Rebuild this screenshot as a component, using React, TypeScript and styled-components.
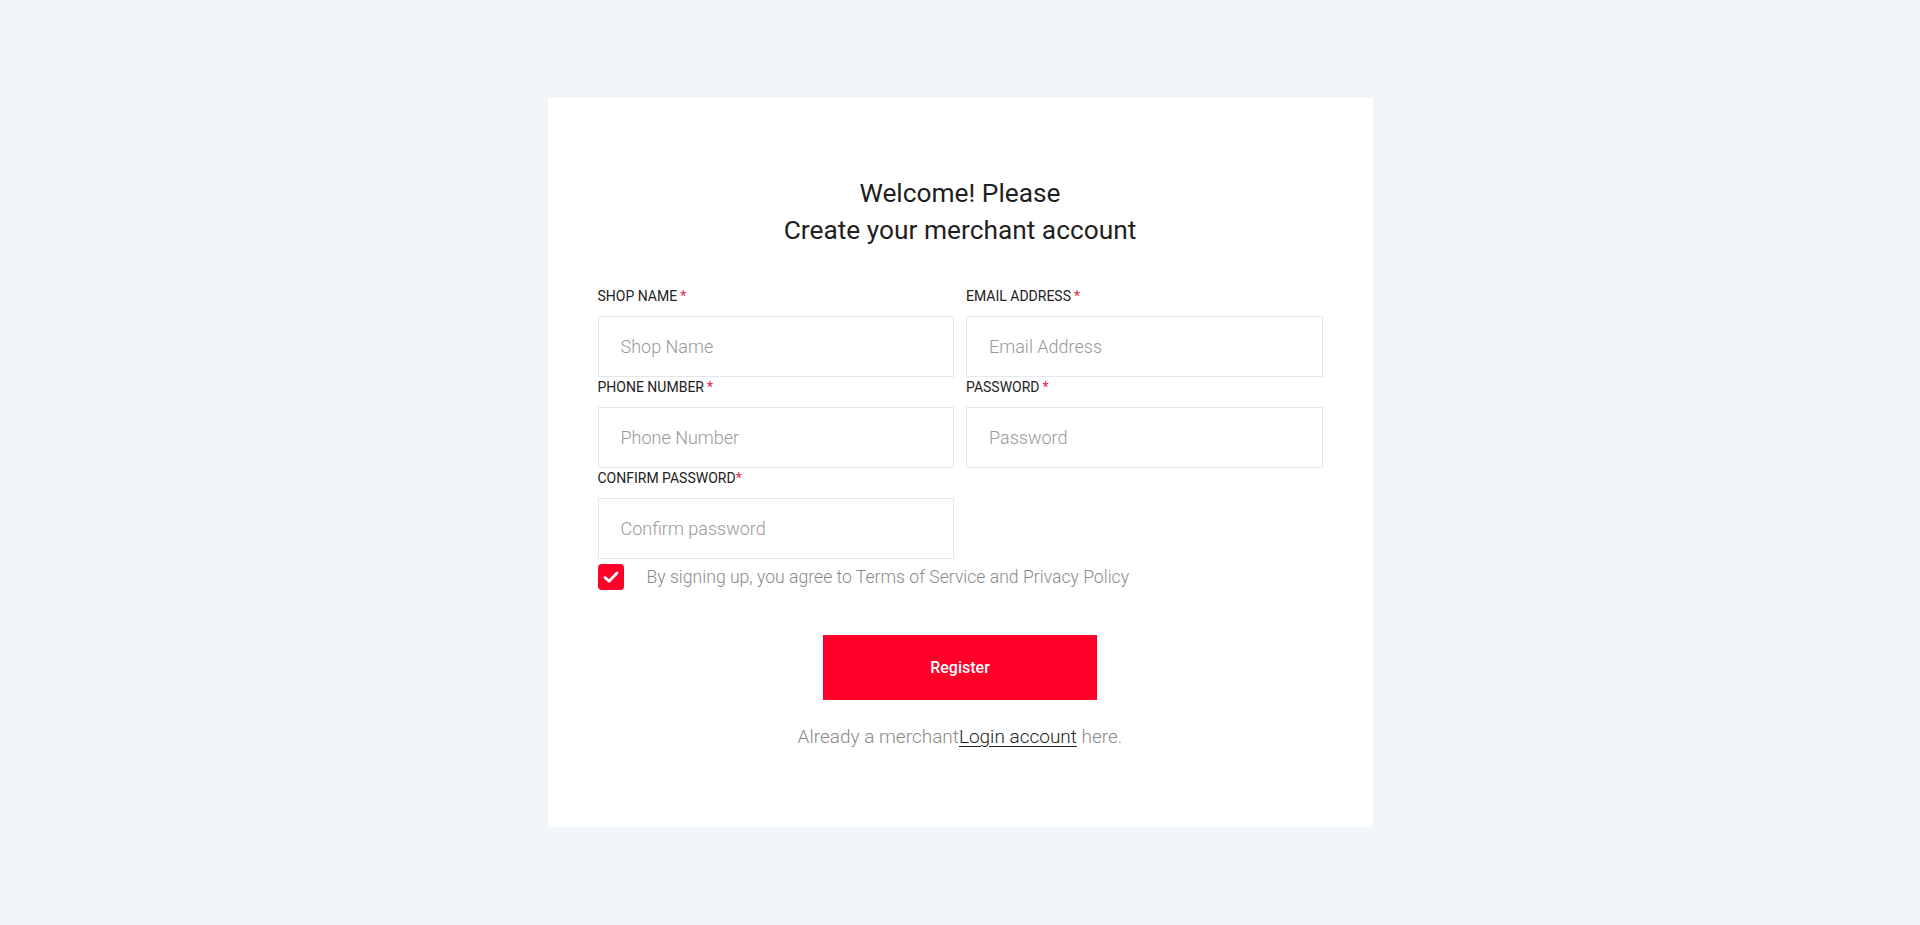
import React from "react";
import styled, { createGlobalStyle } from "styled-components";

const GlobalStyle = createGlobalStyle`
  * { box-sizing: border-box; }
  html, body { margin: 0; padding: 0; }
  body {
    background: #f3f6f9;
    font-family: Roboto, "Liberation Sans", Arial, sans-serif;
    color: #222;
  }
`;

const Page = styled.div`
  min-height: 100vh;
  display: flex;
  align-items: center;
  justify-content: center;
`;

const Card = styled.div`
  width: 825px;
  background: #ffffff;
  padding: 77px 50px 79px;
`;

const Title = styled.h1`
  margin: 0 0 37px;
  font-size: 26.3px;
  line-height: 37px;
  font-weight: 400;
  text-align: center;
  color: #1f1f1f;
`;

const FormGrid = styled.div`
  display: grid;
  grid-template-columns: 1fr 1fr;
  column-gap: 12px;
`;

const Field = styled.div`
  display: flex;
  flex-direction: column;
`;

const Label = styled.label`
  font-size: 14px;
  line-height: 20px;
  font-weight: 400;
  text-transform: uppercase;
  color: #222;
  margin-bottom: 10px;
`;

const Required = styled.span<{ $tight?: boolean }>`
  color: #e8263f;
  margin-left: ${(p) => (p.$tight ? "0" : "3px")};
`;

const Input = styled.input`
  height: 61px;
  border: 1px solid #e3e6ea;
  padding: 0 22px;
  font-family: Roboto, "Liberation Sans", Arial, sans-serif;
  font-size: 18px;
  font-weight: 300;
  color: #222;
  outline: none;
  background: #fff;
  &::placeholder {
    color: #999;
  }
`;

const AgreeRow = styled.label`
  display: flex;
  align-items: center;
  gap: 23px;
  margin-top: 5px;
`;

const CheckBox = styled.span`
  width: 26px;
  height: 26px;
  border-radius: 4px;
  background: #ff0029;
  display: flex;
  align-items: center;
  justify-content: center;
  flex-shrink: 0;
`;

const AgreeText = styled.span`
  font-size: 17.6px;
  font-weight: 300;
  color: #8a8a8a;
`;

const ButtonRow = styled.div`
  display: flex;
  justify-content: center;
  margin-top: 45px;
`;

const RegisterButton = styled.button`
  width: 274px;
  height: 65px;
  border: none;
  background: #ff0029;
  color: #fff;
  font-family: Roboto, "Liberation Sans", Arial, sans-serif;
  font-size: 16px;
  font-weight: 500;
  cursor: pointer;
`;

const Footer = styled.p`
  margin: 25px 0 0;
  text-align: center;
  font-size: 19px;
  font-weight: 300;
  color: #8a8a8a;
`;

const LoginLink = styled.a`
  color: #222;
  text-decoration: underline;
  text-underline-offset: 3px;
  font-weight: 300;
`;

type FieldDef = { label: string; placeholder: string; type: string; tight?: boolean };

const fields: FieldDef[] = [
  { label: "Shop Name", placeholder: "Shop Name", type: "text" },
  { label: "Email Address", placeholder: "Email Address", type: "email" },
  { label: "Phone Number", placeholder: "Phone Number", type: "tel" },
  { label: "Password", placeholder: "Password", type: "password" },
  { label: "Confirm Password", placeholder: "Confirm password", type: "password", tight: true },
];

export default function App() {
  return (
    <>
      <GlobalStyle />
      <Page>
        <Card>
          <Title>
            Welcome! Please
            <br />
            Create your merchant account
          </Title>
          <FormGrid>
            {fields.map((f) => (
              <Field key={f.label}>
                <Label>
                  {f.label}
                  <Required $tight={f.tight}>*</Required>
                </Label>
                <Input type={f.type} placeholder={f.placeholder} />
              </Field>
            ))}
          </FormGrid>
          <AgreeRow>
            <CheckBox>
              <svg width="18" height="18" viewBox="0 0 18 18" fill="none">
                <polyline
                  points="3,9.5 7,13.2 15,5"
                  stroke="#fff"
                  strokeWidth="2.8"
                  strokeLinecap="round"
                  strokeLinejoin="round"
                />
              </svg>
            </CheckBox>
            <AgreeText>By signing up, you agree to Terms of Service and Privacy Policy</AgreeText>
          </AgreeRow>
          <ButtonRow>
            <RegisterButton type="button">Register</RegisterButton>
          </ButtonRow>
          <Footer>
            Already a merchant<LoginLink href="#">Login account</LoginLink> here.
          </Footer>
        </Card>
      </Page>
    </>
  );
}
